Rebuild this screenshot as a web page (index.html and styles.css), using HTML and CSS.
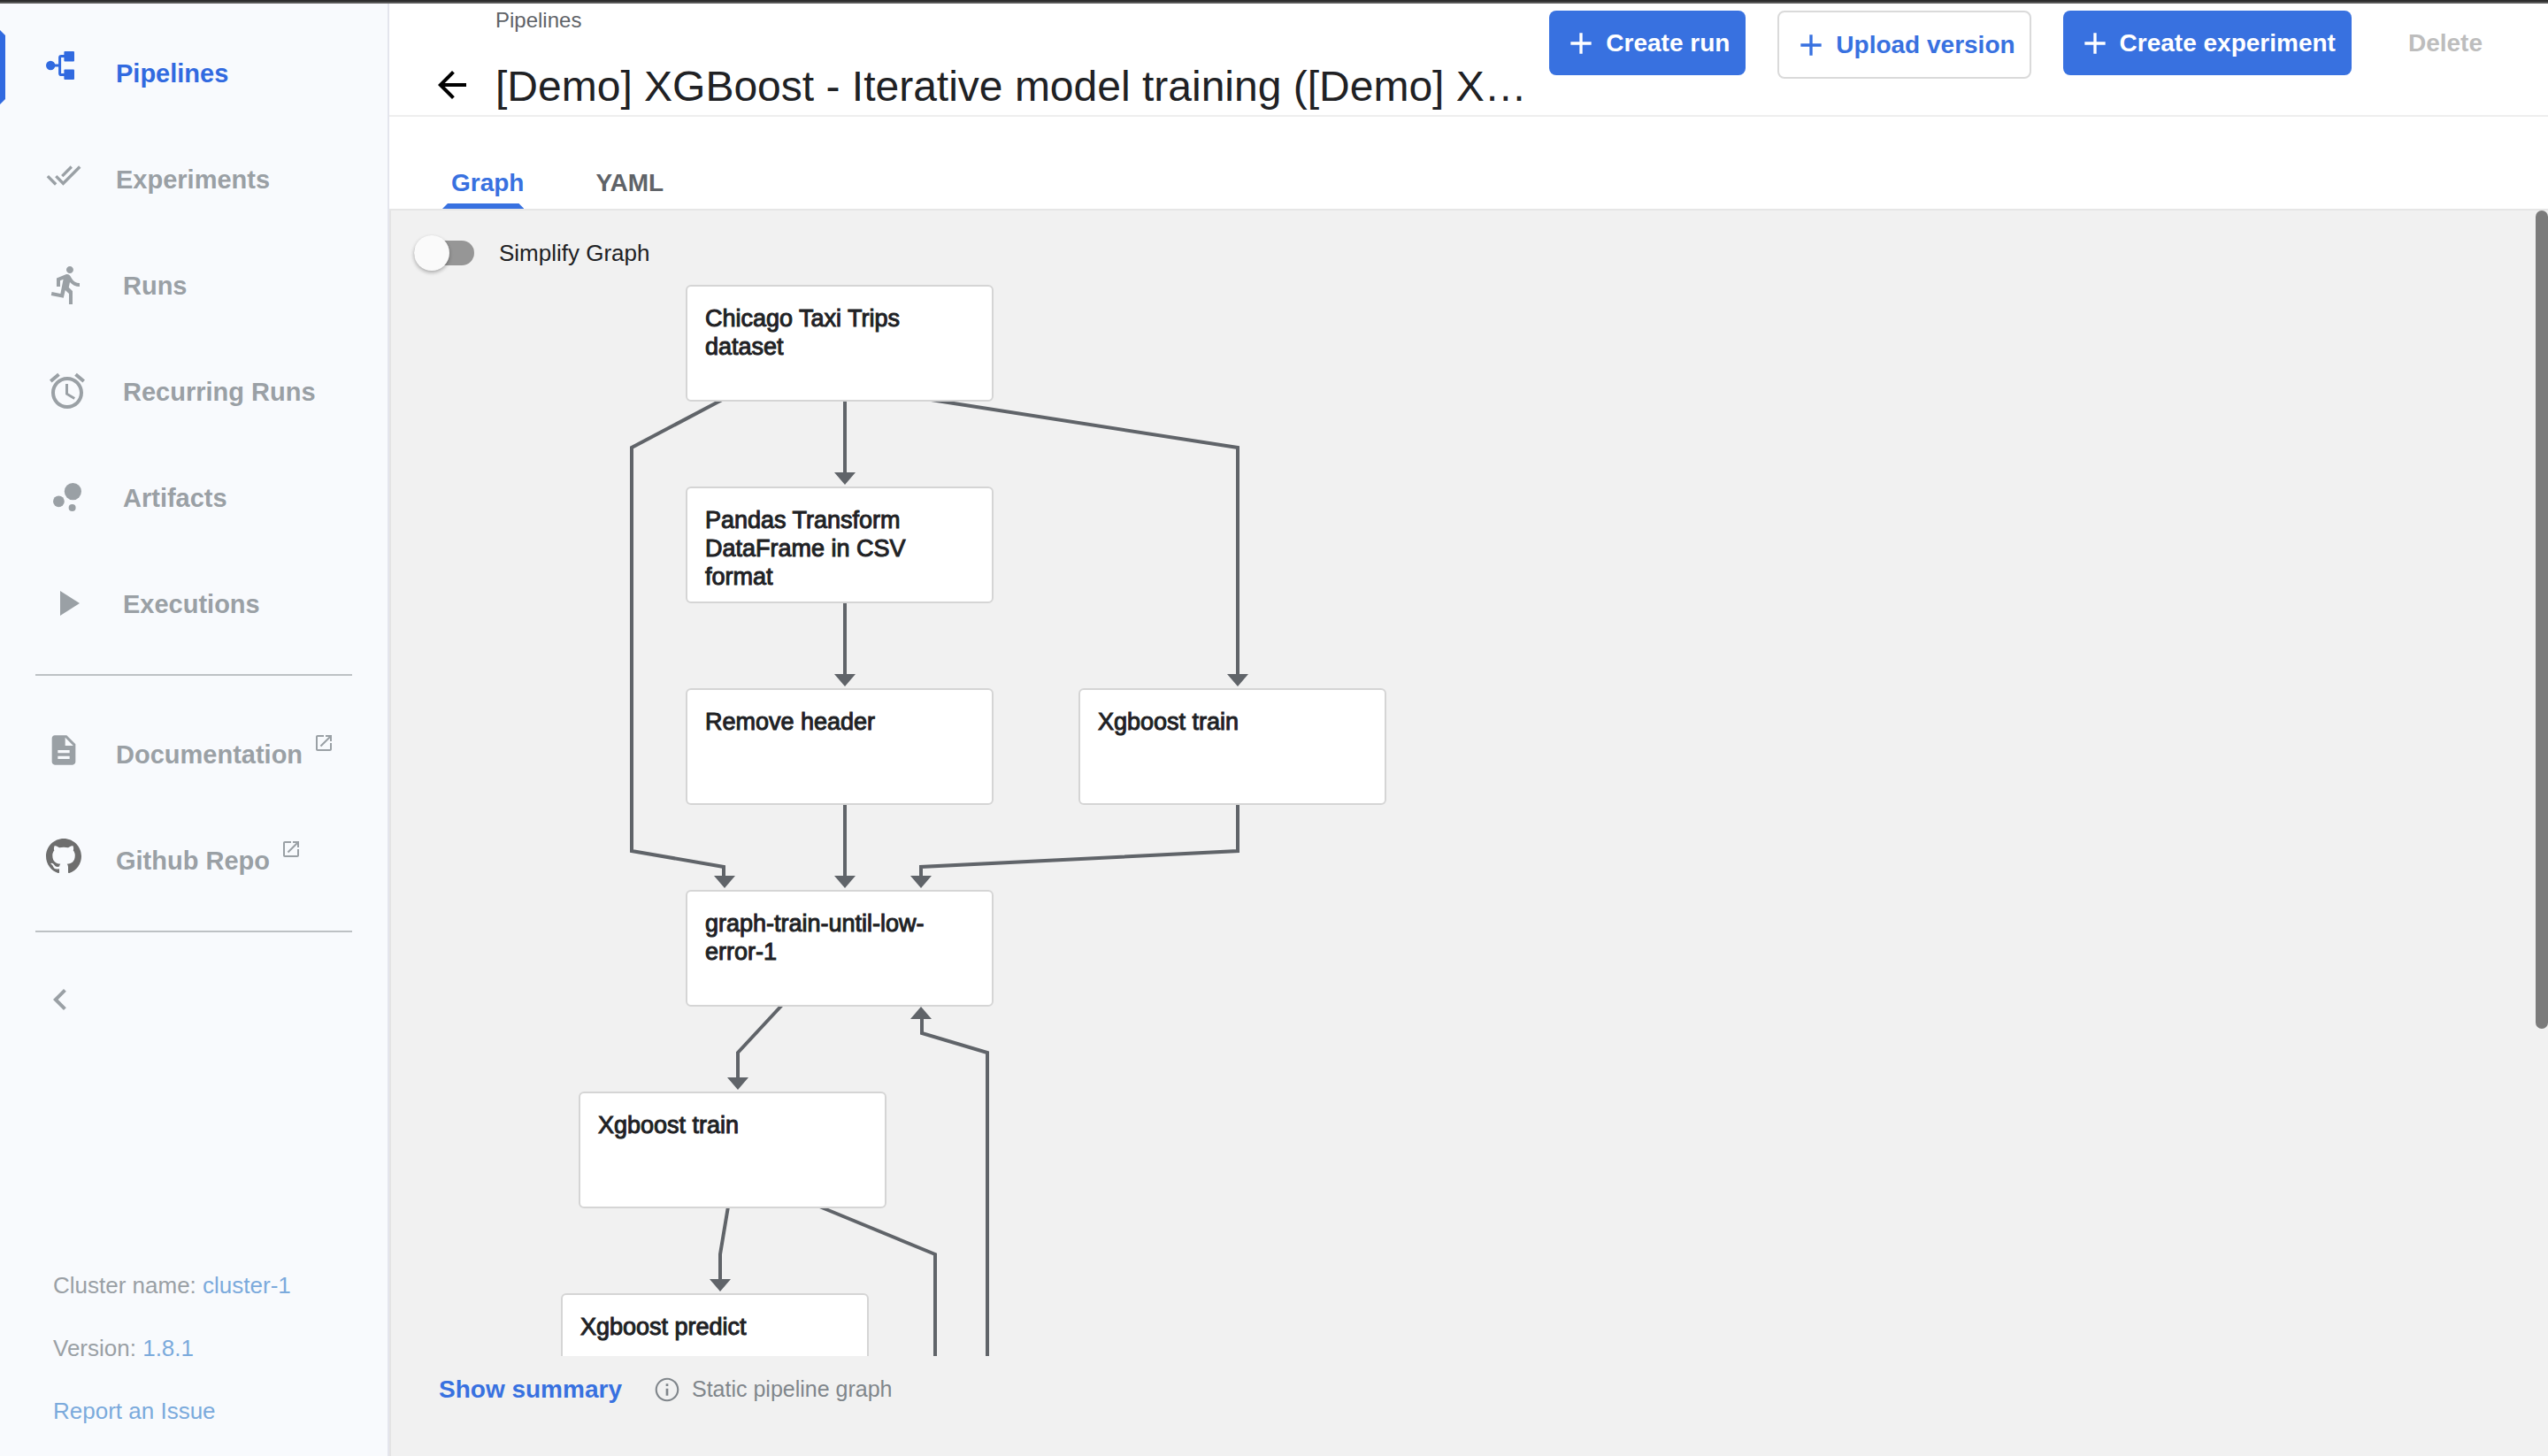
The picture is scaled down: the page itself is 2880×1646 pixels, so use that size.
FILE: index.html
```html
<!DOCTYPE html>
<html lang="en">
<head>
<meta charset="utf-8">
<title>Kubeflow Pipelines</title>
<link rel="stylesheet" href="styles.css">
</head>
<body>
<div class="app">
  <aside class="sidebar">
    <nav class="nav" aria-label="Main">
      <a class="nav-item active" href="#pipelines">
        <svg class="icon-md" viewBox="0 0 20 20"><circle cx="2.6" cy="8" r="2.6"/><rect x="10.2" y="0" width="5.8" height="5.7" rx=".5"/><rect x="10.2" y="10.3" width="5.8" height="5.7" rx=".5"/><path d="M4 8h4M11 2.7H8.6q-.8 0-.8.8v9q0 .8.8.8H11" fill="none" stroke="currentColor" stroke-width="1.5"/></svg>
        <span class="label">Pipelines</span>
      </a>
      <a class="nav-item" href="#experiments">
        <svg class="icon-md" viewBox="0 0 24 24"><path d="M18 7l-1.41-1.41-6.34 6.34 1.41 1.41L18 7zm4.24-1.41L11.66 16.17 7.48 12l-1.41 1.41L11.66 19l12-12-1.42-1.41zM.41 13.41L6 19l1.41-1.41L1.83 12 .41 13.41z"/></svg>
        <span class="label">Experiments</span>
      </a>
      <a class="nav-item" href="#runs">
        <svg class="icon-lg" viewBox="0 0 24 24"><path d="M13.49 5.48c1.1 0 2-.9 2-2s-.9-2-2-2-2 .9-2 2 .9 2 2 2zm-3.6 13.9l1-4.4 2.1 2v6h2v-7.5l-2.1-2 .6-3c1.3 1.5 3.3 2.5 5.5 2.5v-2c-1.9 0-3.5-1-4.3-2.4l-1-1.6c-.4-.6-1-1-1.7-1-.3 0-.5.1-.8.1l-5.2 2.2v4.7h2v-3.4l1.8-.7-1.6 8.1-4.9-1-.4 2 7 1.4z"/></svg>
        <span class="label">Runs</span>
      </a>
      <a class="nav-item" href="#recurring">
        <svg class="icon-lg" viewBox="0 0 24 24"><path d="M22 5.72l-4.6-3.86-1.29 1.53 4.6 3.86L22 5.72zM7.88 3.39L6.6 1.86 2 5.71l1.29 1.53 4.59-3.85zM12.5 8H11v6l4.75 2.85.75-1.23-4-2.37V8zM12 4c-4.97 0-9 4.03-9 9s4.02 9 9 9c4.97 0 9-4.03 9-9s-4.03-9-9-9zm0 16c-3.87 0-7-3.13-7-7s3.13-7 7-7 7 3.13 7 7-3.13 7-7 7z"/></svg>
        <span class="label">Recurring Runs</span>
      </a>
      <a class="nav-item" href="#artifacts">
        <svg class="icon-lg" viewBox="0 0 24 24"><circle cx="7.2" cy="14.4" r="3.2"/><circle cx="14.8" cy="18" r="2"/><circle cx="15.2" cy="8.8" r="4.8"/></svg>
        <span class="label">Artifacts</span>
      </a>
      <a class="nav-item" href="#executions">
        <svg class="icon-lg" viewBox="0 0 24 24"><path d="M8 5v14l11-7z"/></svg>
        <span class="label">Executions</span>
      </a>
      <hr class="divider">
      <a class="nav-item" href="#documentation">
        <svg class="icon-md" viewBox="0 0 24 24"><path d="M14 2H6c-1.1 0-1.99.9-1.99 2L4 20c0 1.1.89 2 1.99 2H18c1.1 0 2-.9 2-2V8l-6-6zm2 16H8v-2h8v2zm0-4H8v-2h8v2zm-3-5V3.5L18.5 9H13z"/></svg>
        <span class="label">Documentation</span>
        <svg class="icon-ext" viewBox="0 0 24 24"><path d="M19 19H5V5h7V3H5c-1.11 0-2 .9-2 2v14c0 1.1.89 2 2 2h14c1.1 0 2-.9 2-2v-7h-2v7zM14 3v2h3.59l-9.83 9.83 1.41 1.41L19 6.41V10h2V3h-7z"/></svg>
      </a>
      <a class="nav-item" href="#github">
        <svg class="icon-md github" viewBox="0 0 16 16"><path d="M8 0C3.58 0 0 3.58 0 8c0 3.54 2.29 6.53 5.47 7.59.4.07.55-.17.55-.38 0-.19-.01-.82-.01-1.49-2.01.37-2.53-.49-2.69-.94-.09-.23-.48-.94-.82-1.13-.28-.15-.68-.52-.01-.53.63-.01 1.08.58 1.23.82.72 1.21 1.87.87 2.33.66.07-.52.28-.87.51-1.07-1.78-.2-3.64-.89-3.64-3.95 0-.87.31-1.59.82-2.15-.08-.2-.36-1.02.08-2.12 0 0 .67-.21 2.2.82.64-.18 1.32-.27 2-.27s1.36.09 2 .27c1.53-1.04 2.2-.82 2.2-.82.44 1.1.16 1.92.08 2.12.51.56.82 1.27.82 2.15 0 3.07-1.87 3.75-3.65 3.95.29.25.54.73.54 1.48 0 1.07-.01 1.93-.01 2.2 0 .21.15.46.55.38A8.01 8.01 0 0016 8c0-4.42-3.58-8-8-8z"/></svg>
        <span class="label">Github Repo</span>
        <svg class="icon-ext" viewBox="0 0 24 24"><path d="M19 19H5V5h7V3H5c-1.11 0-2 .9-2 2v14c0 1.1.89 2 2 2h14c1.1 0 2-.9 2-2v-7h-2v7zM14 3v2h3.59l-9.83 9.83 1.41 1.41L19 6.41V10h2V3h-7z"/></svg>
      </a>
      <hr class="divider">
      <button class="collapse" type="button" aria-label="Collapse menu">
        <svg class="icon-lg" viewBox="0 0 24 24"><path d="M15.41 7.41L14 6l-6 6 6 6 1.41-1.41L10.83 12z"/></svg>
      </button>
    </nav>
    <div class="env">
      <div>Cluster name: <a href="#cluster">cluster-1</a></div>
      <div>Version: <a href="#version">1.8.1</a></div>
      <div><a href="#issue">Report an Issue</a></div>
    </div>
  </aside>

  <main class="page">
    <header class="toolbar">
      <button class="back" type="button" aria-label="Back">
        <svg class="icon-lg" viewBox="0 0 24 24"><path d="M20 11H7.83l5.59-5.59L12 4l-8 8 8 8 1.41-1.41L7.83 13H20v-2z"/></svg>
      </button>
      <div class="titles">
        <a class="breadcrumb" href="#pipelines">Pipelines</a>
        <h1 class="title">[Demo] XGBoost - Iterative model training ([Demo] XGBoost - Iterative model training)</h1>
      </div>
      <div class="actions">
        <button class="btn primary" type="button"><svg class="icon-add" viewBox="0 0 24 24"><path d="M19 13h-6v6h-2v-6H5v-2h6V5h2v6h6v2z"/></svg>Create run</button>
        <button class="btn outlined" type="button"><svg class="icon-add" viewBox="0 0 24 24"><path d="M19 13h-6v6h-2v-6H5v-2h6V5h2v6h6v2z"/></svg>Upload version</button>
        <button class="btn primary" type="button"><svg class="icon-add" viewBox="0 0 24 24"><path d="M19 13h-6v6h-2v-6H5v-2h6V5h2v6h6v2z"/></svg>Create experiment</button>
        <button class="btn plain" type="button" disabled>Delete</button>
      </div>
    </header>

    <div class="tabs" role="tablist">
      <button class="tab selected" type="button" role="tab" aria-selected="true">Graph</button>
      <button class="tab" type="button" role="tab" aria-selected="false">YAML</button>
    </div>

    <section class="panel">
      <div class="canvas">
        <label class="switch"><input class="switch-input" type="checkbox"><span>Simplify Graph</span></label>
        <svg class="edges" width="1200" height="1400" viewBox="0 0 1200 1400">
          <g fill="none" stroke="currentColor" stroke-width="4">
            <path d="M376 213L272 268V724L376 742V753"/>
            <path d="M513 216V297M513 444V525M513 672V753"/>
            <path d="M604 213L957 268V525"/>
            <path d="M957 672V724L599 742V753"/>
            <path d="M444 896L392 952V981"/>
            <path d="M600 913V930L674 952V1400"/>
            <path d="M381 1126L372 1180V1209"/>
            <path d="M477 1123L615 1180V1400"/>
          </g>
          <path d="M501 296h24l-12 14zM501 524h24l-12 14zM945 524h24l-12 14zM365 752h24l-12 14zM501 752h24l-12 14zM587 752h24l-12 14zM380 980h24l-12 14zM360 1208h24l-12 14zM587 914h24l-12-14z"/>
        </svg>
        <div class="node" style="left:333px;top:84px">Chicago Taxi Trips dataset</div>
        <div class="node" style="left:333px;top:312px">Pandas Transform DataFrame in CSV format</div>
        <div class="node" style="left:333px;top:540px">Remove header</div>
        <div class="node" style="left:777px;top:540px">Xgboost train</div>
        <div class="node" style="left:333px;top:768px">graph-train-until-low-error-1</div>
        <div class="node" style="left:212px;top:996px">Xgboost train</div>
        <div class="node" style="left:192px;top:1224px">Xgboost predict</div>
      </div>
      <footer class="summary">
        <button class="link-btn" type="button">Show summary</button>
        <svg class="icon-info" viewBox="0 0 24 24"><path d="M11 17h2v-6h-2v6zm1-15C6.48 2 2 6.48 2 12s4.48 10 10 10 10-4.48 10-10S17.52 2 12 2zm0 18.400c-4.630 0-8.400-3.770-8.400-8.400S7.370 3.600 12 3.600s8.400 3.770 8.400 8.400-3.770 8.400-8.400 8.400zM11 9h2V7h-2v2z"/></svg>
        <span>Static pipeline graph</span>
      </footer>
      <div class="scroll-thumb"></div>
    </section>
  </main>
</div>
</body>
</html>
```
FILE: styles.css
```css
* { box-sizing: border-box; }

body {
  margin: 0;
  font-family: "Liberation Sans", Arial, sans-serif;
  font-size: 26px;
  color: #202124;
  background: #fff;
}

a { color: inherit; text-decoration: none; }
button { border: 0; margin: 0; padding: 0; background: none; font: inherit; color: inherit; cursor: pointer; }
svg { display: block; flex: none; fill: currentColor; }

.app {
  display: flex;
  height: 100vh;
  border-top: 4px solid #585858;
  overflow: hidden;
}
.app::before {
  content: "";
  position: fixed;
  top: 0;
  left: 0;
  right: 0;
  height: 2px;
  background: #2d2d2d;
}

.icon-lg { width: 48px; height: 48px; }
.icon-md { width: 40px; height: 40px; margin-bottom: 8px; }
.icon-add { width: 40px; height: 40px; }
.icon-info { width: 32px; height: 32px; }
.icon-ext { width: 24px; height: 24px; margin: 0 0 24px 12px; }

/* Sidebar */
.sidebar {
  flex: none;
  width: 440px;
  display: flex;
  flex-direction: column;
  background: #f8fafd;
  border-right: 2px solid #e4e5ed;
  color: #9aa0a5;
}
.nav { padding-top: 18px; }
.nav-item {
  display: flex;
  align-items: center;
  height: 120px;
  padding-left: 52px;
  font-size: 29px;
  font-weight: bold;
  position: relative;
}
.nav-item .label { padding: 3px 0 0 39px; }
.nav-item.active { color: #316ae0; }
.nav-item.active::before {
  content: "";
  position: absolute;
  left: 0;
  top: 12px;
  width: 6px;
  height: 84px;
  background: currentColor;
  clip-path: polygon(0 0, 100% 6px, 100% 78px, 0 100%);
}
.github { color: #6e6e6e; }
.divider { margin: 20px 40px 28px; border: 0; border-top: 2px solid #bdc1c4; }
.collapse { display: flex; align-items: center; height: 96px; margin-left: 44px; }
.env {
  margin-top: auto;
  padding: 0 0 15px 60px;
  line-height: 71px;
}
.env a { color: #7baadc; }

/* Page header */
.page { flex: 1; min-width: 0; display: flex; flex-direction: column; }
.toolbar {
  flex: none;
  display: flex;
  align-items: flex-start;
  height: 128px;
  padding: 0 46px 0 47px;
  border-bottom: 2px solid #eee;
}
.back { margin-top: 68px; color: #000; }
.titles { flex: 1; min-width: 0; padding: 5px 16px 0 25px; }
.breadcrumb { display: block; font-size: 24px; line-height: 28px; color: #5f6368; }
.title {
  margin: 33px 0 0;
  font-size: 48px;
  font-weight: normal;
  line-height: 56px;
  white-space: nowrap;
  overflow: hidden;
  text-overflow: ellipsis;
}
.actions { display: flex; align-items: flex-start; gap: 36px; padding-top: 8px; }
.btn {
  display: flex;
  align-items: center;
  gap: 8px;
  height: 73px;
  padding: 0 18px 0 16px;
  border-radius: 8px;
  font-size: 28px;
  font-weight: bold;
  white-space: nowrap;
}
.btn.primary { background: #3871e0; color: #fff; }
.btn.outlined { height: 77px; padding-right: 16px; border: 2px solid #dadada; color: #3871e0; }
.btn.plain { padding: 0 28px; color: #bdbdbd; }

/* Tabs */
.tabs {
  flex: none;
  display: flex;
  height: 106px;
  padding-left: 60px;
  border-bottom: 2px solid #e6e6e6;
}
.tab {
  position: relative;
  padding: 45px 0 0 10px;
  margin-right: 71px;
  font-size: 28px;
  font-weight: bold;
  color: #5f6368;
}
.tab.selected { color: #3871e0; }
.tab.selected::after {
  content: "";
  position: absolute;
  left: 0;
  right: 0;
  bottom: 0;
  height: 6px;
  background: currentColor;
  clip-path: polygon(6px 0, calc(100% - 6px) 0, 100% 100%, 0 100%);
}

/* Graph */
.panel {
  flex: 1;
  min-height: 0;
  display: flex;
  flex-direction: column;
  position: relative;
  background: #f1f1f1;
  border-left: 2px solid #e4e4e4;
}
.canvas { flex: 1; min-height: 0; position: relative; overflow: hidden; }
.switch {
  display: inline-flex;
  align-items: center;
  gap: 28px;
  padding: 28px 0 0 26px;
}
.switch-input {
  appearance: none;
  display: flex;
  align-items: center;
  width: 68px;
  height: 28px;
  margin: 6px 0;
  border-radius: 14px;
  background: #969696;
}
.switch-input::before {
  content: "";
  width: 40px;
  height: 40px;
  border-radius: 50%;
  background: #fafafa;
  box-shadow: 0 2px 4px rgba(0, 0, 0, .3);
}
.edges { position: absolute; left: 0; top: 0; color: #606469; }
.node {
  position: absolute;
  width: 348px;
  height: 132px;
  padding: 20px 40px 0 20px;
  border: 2px solid #d5d5d5;
  border-radius: 6px;
  background: #fff;
  font-size: 27px;
  line-height: 32px;
  -webkit-text-stroke: 1px currentColor;
}
.summary {
  flex: none;
  display: flex;
  align-items: center;
  height: 113px;
  padding: 0 0 38px 54px;
  font-size: 25px;
  color: #80868b;
}
.link-btn { margin-right: 35px; font-size: 28px; font-weight: bold; color: #3871e0; }
.icon-info { margin-right: 12px; }
.scroll-thumb {
  position: absolute;
  right: 0;
  top: 0;
  width: 14px;
  height: 925px;
  border-radius: 7px;
  background: #7b7b7b;
}
```
